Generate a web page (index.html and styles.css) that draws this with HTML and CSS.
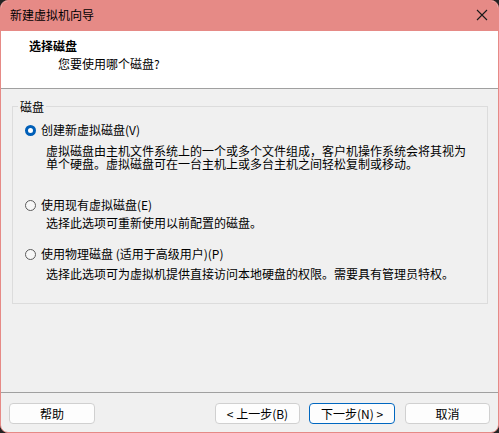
FILE: index.html
```html
<!DOCTYPE html>
<html lang="zh-CN">
<head>
<meta charset="utf-8">
<title>新建虚拟机向导</title>
<link rel="stylesheet" href="styles.css">
</head>
<body>
<div class="window">
  <div class="titlebar">
    <span class="title">新建虚拟机向导</span>
    <svg class="close" width="12" height="12" viewBox="0 0 12 12" aria-hidden="true">
      <path d="M1 1 L11 11 M11 1 L1 11" stroke="#1a1a1a" stroke-width="1.1" fill="none"/>
    </svg>
  </div>
  <div class="header">
    <div class="h-title">选择磁盘</div>
    <div class="h-sub">您要使用哪个磁盘?</div>
  </div>
  <div class="content">
    <fieldset class="group">
      <legend>磁盘</legend>
      <div class="option opt1"><span class="radio checked"></span><span>创建新虚拟磁盘(V)</span></div>
      <p class="desc desc1">虚拟磁盘由主机文件系统上的一个或多个文件组成，客户机操作系统会将其视为<br>单个硬盘。虚拟磁盘可在一台主机上或多台主机之间轻松复制或移动。</p>
      <div class="option opt2"><span class="radio"></span><span>使用现有虚拟磁盘(E)</span></div>
      <p class="desc desc2">选择此选项可重新使用以前配置的磁盘。</p>
      <div class="option opt3"><span class="radio"></span><span>使用物理磁盘 (适用于高级用户)(P)</span></div>
      <p class="desc desc3">选择此选项可为虚拟机提供直接访问本地硬盘的权限。需要具有管理员特权。</p>
    </fieldset>
  </div>
  <div class="footer">
    <button class="btn">帮助</button>
    <div class="spacer"></div>
    <button class="btn btn-back">&lt; 上一步(B)</button>
    <button class="btn btn-next default">下一步(N) &gt;</button>
    <button class="btn btn-cancel">取消</button>
  </div>
</div>
</body>
</html>
```
FILE: styles.css
```css
* { box-sizing: border-box; }
html, body {
  margin: 0;
  padding: 0;
  background: #242424;
}
body {
  font-family: "Noto Sans CJK SC", "Microsoft YaHei", sans-serif;
  font-size: 12px;
  color: #000;
}
.window {
  width: 499px;
  height: 433px;
  border: 1px solid #e68a86;
  border-radius: 8px;
  background: #f0f0f0;
  overflow: hidden;
  display: flex;
  flex-direction: column;
}
.titlebar {
  height: 30px;
  flex: none;
  background: #e68a86;
  display: flex;
  align-items: center;
  margin: 0 -1px;
  padding: 0 10px 2px 10px;
}
.title {
  flex: 1;
  line-height: 16px;
}
.close {
  display: block;
  margin-right: 1px;
}
.header {
  height: 58px;
  flex: none;
  background: #fff;
  border-bottom: 1px solid #a0a0a0;
  padding: 7px 0 0 28px;
}
.h-title {
  font-weight: bold;
  line-height: 16px;
}
.h-sub {
  line-height: 16px;
  margin: 2px 0 0 29px;
}
.content {
  height: 303px;
  flex: none;
  padding: 8px 10px 0 11px;
}
.group {
  margin: 0;
  padding: 0 0 23px 0;
  border: 1px solid #dcdcdc;
  min-width: 0;
}
.group legend {
  margin-left: 5px;
  padding: 2px 2px 0;
  line-height: 16px;
}
.option {
  display: flex;
  align-items: center;
  height: 16px;
  line-height: 16px;
  padding-left: 12px;
  gap: 5px;
}
.opt1 { margin-top: 7px; }
.opt2 { margin-top: 27px; }
.opt3 { margin-top: 17px; }
.radio {
  width: 11px;
  height: 11px;
  border-radius: 50%;
  border: 1px solid #5c5c5c;
  background: #f7f7f7;
  flex: none;
}
.radio.checked {
  border: 3px solid #005fb8;
  background: #fff;
}
.desc {
  margin: 0;
  padding-left: 33px;
  line-height: 13px;
}
.desc1 { margin-top: 6px; }
.desc2 { margin-top: 3px; }
.desc3 { margin-top: 5px; }
.footer {
  flex: 1;
  border-top: 1px solid #a0a0a0;
  display: flex;
  align-items: flex-start;
  padding: 10px 8px 0 8px;
}
.spacer { flex: 1; }
.btn {
  height: 21px;
  width: 86px;
  padding: 0;
  border: 1px solid #d0d0d0;
  border-radius: 4px;
  background: #fdfdfd;
  font-family: inherit;
  font-size: 12px;
  line-height: 19px;
  color: #000;
}
.btn-back { width: 85px; }
.btn-next { margin-left: 9px; }
.btn-cancel { margin-left: 10px; width: 85px; }
.btn.default {
  border-color: #0067c0;
}
```
